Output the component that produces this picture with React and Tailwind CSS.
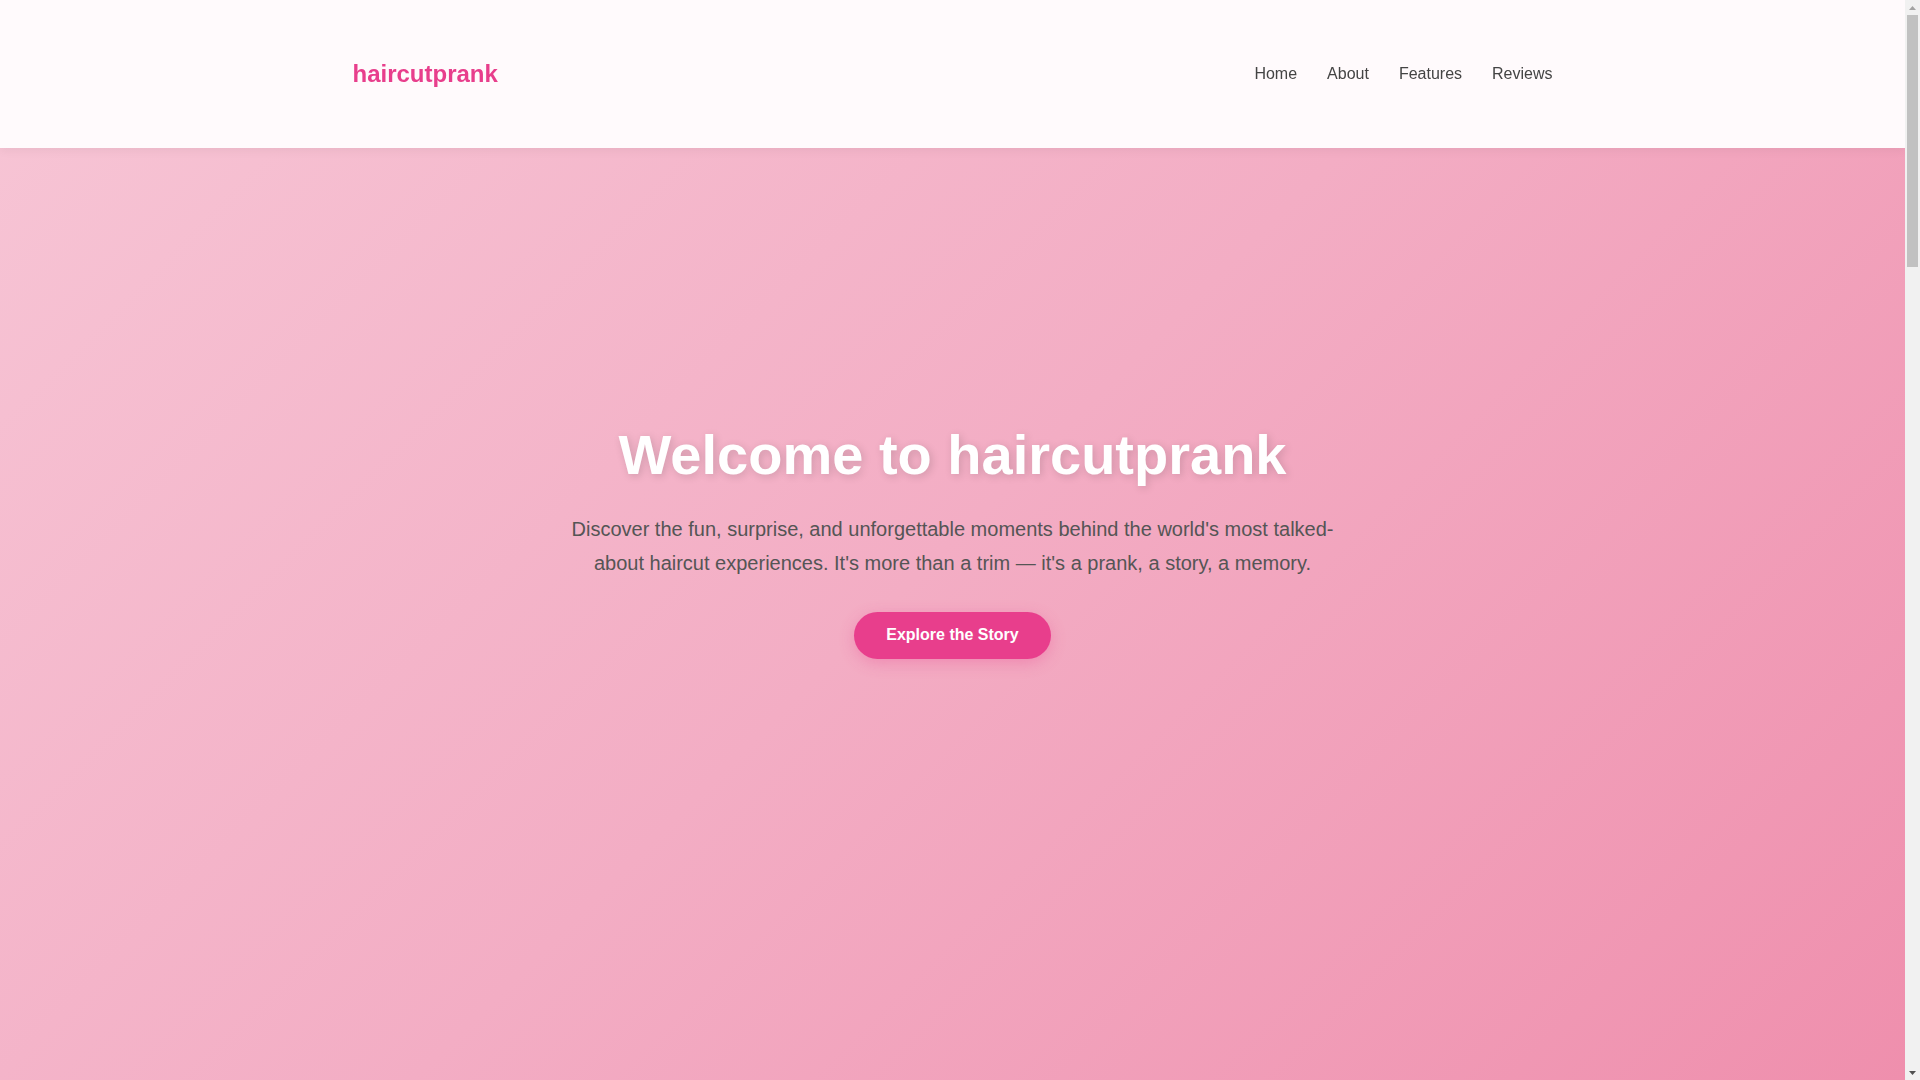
export default function App() {
  const font = { fontFamily: '"Liberation Sans", Arial, sans-serif' };
  return (
    <div className="h-screen flex bg-[#fffafc] text-[#333]" style={font}>
      <div className="flex-1 min-w-0 h-full overflow-y-auto [scrollbar-width:none]">
        <header className="sticky top-0 z-50 h-[148px] bg-[#fffafc] shadow-[0_2px_10px_rgba(0,0,0,0.06)]">
          <div className="max-w-[1200px] mx-auto h-full flex items-center justify-between">
            <a href="#" className="text-[24px] font-bold text-[#e83e8c] leading-none">haircutprank</a>
            <nav className="flex items-center gap-[30px] text-[16px] text-[#444]">
              <a href="#">Home</a>
              <a href="#">About</a>
              <a href="#">Features</a>
              <a href="#">Reviews</a>
            </nav>
          </div>
        </header>

        <section className="-mt-[148px] h-screen flex items-center justify-center bg-[linear-gradient(135deg,#f7c6d6_0%,#f3adc4_50%,#ef8fad_100%)]">
          <div className="flex flex-col items-center text-center">
            <h1 className="text-[56px] font-bold leading-[1.2] text-white [text-shadow:2px_2px_8px_rgba(0,0,0,0.15)]">
              Welcome to haircutprank
            </h1>
            <p className="mt-6 max-w-[800px] text-[20px] leading-[1.7] text-[#555]">
              Discover the fun, surprise, and unforgettable moments behind the world's most talked-about haircut experiences. It's more than a trim — it's a prank, a story, a memory.
            </p>
            <a href="#" className="mt-8 rounded-full bg-[#e83e8c] px-8 py-[14px] text-[16px] font-bold leading-[1.15] text-white shadow-[0_4px_15px_rgba(232,62,140,0.3)]">
              Explore the Story
            </a>
          </div>
        </section>

        <section className="py-24 bg-white">
          <div className="max-w-[1200px] mx-auto">
            <h2 className="text-[40px] font-bold text-[#e83e8c] text-center mb-10">About haircutprank</h2>
            <p className="max-w-[800px] mx-auto text-[18px] leading-[1.8] text-[#555] text-center">
              haircutprank started as a simple idea: capture the genuine reactions of people when their haircut doesn't go quite as planned. What began as a lighthearted joke grew into a collection of stories that celebrate laughter, surprise and good sportsmanship.
            </p>
            <div className="h-[600px]" />
          </div>
        </section>

        <section className="py-24 bg-[#fff0f5]">
          <div className="max-w-[1200px] mx-auto">
            <h2 className="text-[40px] font-bold text-[#e83e8c] text-center mb-12">Features</h2>
            <div className="grid grid-cols-3 gap-8">
              {["Real Reactions", "Behind the Scenes", "Community Stories", "Safe & Fun", "Pro Stylists", "Happy Endings"].map((t) => (
                <div key={t} className="rounded-2xl bg-white p-8 h-[300px] shadow-[0_4px_20px_rgba(0,0,0,0.05)]">
                  <h3 className="text-[22px] font-bold text-[#333] mb-3">{t}</h3>
                  <p className="text-[16px] leading-[1.7] text-[#666]">Every prank ends with a smile and a fresh new look.</p>
                </div>
              ))}
            </div>
          </div>
        </section>

        <section className="py-24 bg-white">
          <div className="max-w-[1200px] mx-auto">
            <h2 className="text-[40px] font-bold text-[#e83e8c] text-center mb-12">Reviews</h2>
            <div className="grid grid-cols-2 gap-8">
              {["Sarah", "Mike", "Emma", "Jake"].map((n) => (
                <div key={n} className="rounded-2xl bg-[#fff5f8] p-8 h-[260px]">
                  <p className="text-[18px] leading-[1.7] text-[#555] italic">"I couldn't stop laughing. Best prank ever!"</p>
                  <p className="mt-4 font-bold text-[#e83e8c]">— {n}</p>
                </div>
              ))}
            </div>
          </div>
        </section>

        <footer className="py-16 bg-[#e83e8c] text-white text-center">
          <p className="text-[16px]">© 2024 haircutprank. All rights reserved.</p>
        </footer>
      </div>

      <div className="w-[15px] h-full shrink-0 flex flex-col bg-[#f1f1f1]">
        <div className="h-[15px] flex items-center justify-center">
          <svg width="7" height="4" viewBox="0 0 7 4"><path d="M0 4 L3.5 0 L7 4 Z" fill="#a3a3a3" /></svg>
        </div>
        <div className="h-[252px] mx-[2px] bg-[#c1c1c1]" />
        <div className="flex-1" />
        <div className="h-[15px] flex items-center justify-center">
          <svg width="7" height="4" viewBox="0 0 7 4"><path d="M0 0 L7 0 L3.5 4 Z" fill="#505050" /></svg>
        </div>
      </div>
    </div>
  );
}
